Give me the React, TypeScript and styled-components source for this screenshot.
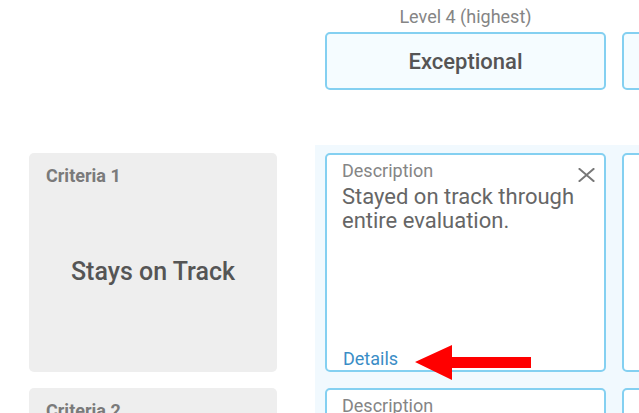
import styled, { createGlobalStyle } from "styled-components";

const GlobalStyle = createGlobalStyle`
  html, body {
    margin: 0;
    padding: 0;
    background: #ffffff;
    overflow: hidden;
  }
  body {
    font-family: Roboto, "Liberation Sans", Arial, sans-serif;
  }
`;

const Page = styled.div`
  padding-left: 29px;
  width: 900px;
`;

const HeaderRow = styled.div`
  display: flex;
  padding-left: 296px;
  gap: 16px;
`;

const LevelHead = styled.div`
  width: 281px;
  display: flex;
  flex-direction: column;
  align-items: center;
  padding-top: 6px;
`;

const LevelLabel = styled.div`
  font-size: 18px;
  line-height: 21px;
  min-height: 21px;
  color: #858585;
  margin-bottom: 5px;
`;

const LevelBox = styled.div`
  box-sizing: border-box;
  width: 100%;
  height: 58px;
  border: 2px solid #84d0f1;
  border-radius: 5px;
  background: #f5fcff;
  display: flex;
  align-items: center;
  justify-content: center;
  font-size: 22px;
  font-weight: 500;
  color: #555555;
`;

const Body = styled.div`
  display: flex;
  margin-top: 55px;
`;

const CriteriaColumn = styled.div`
  width: 248px;
  padding-top: 8px;
  display: flex;
  flex-direction: column;
  gap: 16px;
`;

const CriteriaCard = styled.div`
  box-sizing: border-box;
  height: 219px;
  background: #eeeeee;
  border-radius: 5px;
  padding: 12px 17px 15px;
  display: flex;
  flex-direction: column;
`;

const CriteriaLabel = styled.div`
  font-size: 18px;
  line-height: 21px;
  font-weight: 700;
  color: #7a7a7a;
`;

const CriteriaTitle = styled.div`
  flex: 1;
  display: flex;
  align-items: center;
  justify-content: center;
  font-size: 25px;
  font-weight: 500;
  color: #555555;
`;

const LevelArea = styled.div`
  margin-left: 38px;
  padding: 8px 10px;
  background: #f1f9fe;
  display: grid;
  grid-template-columns: repeat(2, 281px);
  grid-auto-rows: 219px;
  gap: 16px;
`;

const DescCard = styled.div`
  position: relative;
  box-sizing: border-box;
  background: #ffffff;
  border: 2px solid #84d0f1;
  border-radius: 5px;
  padding: 5px 15px 1px;
  display: flex;
  flex-direction: column;
`;

const DescLabel = styled.div`
  font-size: 18px;
  line-height: 21px;
  color: #858585;
`;

const DescText = styled.div`
  margin-top: 4px;
  font-size: 22px;
  line-height: 24px;
  color: #666666;
`;

const DetailsLink = styled.a`
  margin-top: auto;
  font-size: 18px;
  line-height: 21px;
  color: #3a8dc6;
  text-decoration: none;
  padding-left: 1px;
`;

const CloseButton = styled.button`
  position: absolute;
  top: 12px;
  right: 9px;
  width: 18px;
  height: 15px;
  padding: 0;
  border: none;
  background: transparent;
  display: flex;
  align-items: center;
  justify-content: center;
`;

const Arrow = styled.svg`
  position: absolute;
  left: 88px;
  top: 190px;
  overflow: visible;
`;

const CloseIcon = () => (
  <svg width="17" height="14" viewBox="0 0 17 14">
    <path d="M1.5 1 L15.5 13 M15.5 1 L1.5 13" stroke="#777777" strokeWidth="2" strokeLinecap="square" />
  </svg>
);

// only the first level column is in view; the next one shows just its edge
const levels = [
  { label: "Level 4 (highest)", name: "Exceptional" },
  { label: "", name: "" },
];

const rows = [
  {
    criteria: "Criteria 1",
    title: "Stays on Track",
    cells: [{ text: "Stayed on track through entire evaluation.", active: true }, null],
  },
  {
    criteria: "Criteria 2",
    title: "",
    cells: [{ text: "", active: false }, null],
  },
];

export default function App() {
  return (
    <>
      <GlobalStyle />
      <Page>
        <HeaderRow>
          {levels.map((l, i) => (
            <LevelHead key={i}>
              <LevelLabel>{l.label}</LevelLabel>
              <LevelBox>{l.name}</LevelBox>
            </LevelHead>
          ))}
        </HeaderRow>
        <Body>
          <CriteriaColumn>
            {rows.map((r) => (
              <CriteriaCard key={r.criteria}>
                <CriteriaLabel>{r.criteria}</CriteriaLabel>
                <CriteriaTitle>{r.title}</CriteriaTitle>
              </CriteriaCard>
            ))}
          </CriteriaColumn>
          <LevelArea>
            {rows.map((r, ri) =>
              r.cells.map((c, ci) =>
                c ? (
                  <DescCard key={`${ri}-${ci}`}>
                    <DescLabel>Description</DescLabel>
                    {c.active && (
                      <CloseButton aria-label="Remove">
                        <CloseIcon />
                      </CloseButton>
                    )}
                    <DescText>{c.text}</DescText>
                    {c.active && <DetailsLink href="#">Details</DetailsLink>}
                    {c.active && (
                      <Arrow width="118" height="36" viewBox="0 0 118 36">
                        <polygon points="0,17 37,0 37,12 116,12 116,23 37,23 37,35" fill="#ff0000" />
                      </Arrow>
                    )}
                  </DescCard>
                ) : (
                  <DescCard key={`${ri}-${ci}`} />
                )
              )
            )}
          </LevelArea>
        </Body>
      </Page>
    </>
  );
}
